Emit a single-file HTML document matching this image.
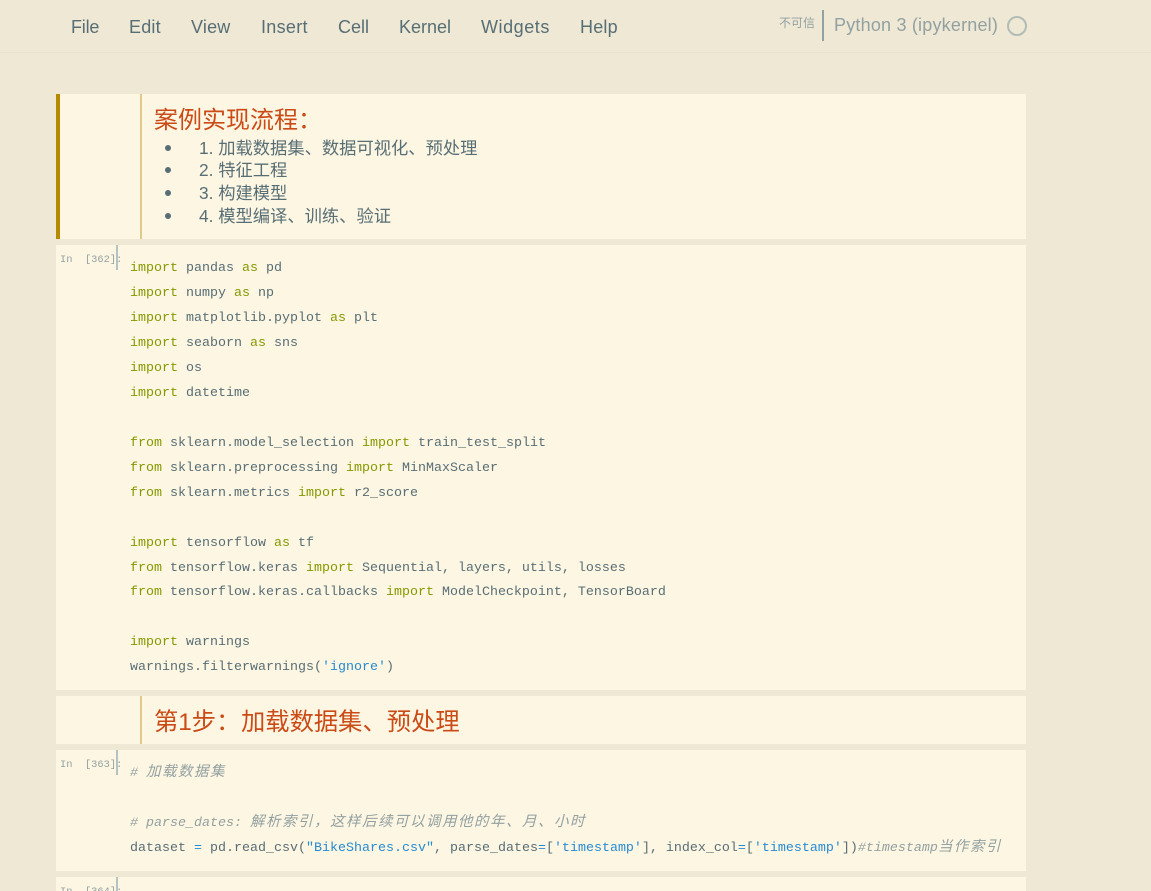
<!DOCTYPE html>
<html lang="zh"><head><meta charset="utf-8"><title>Notebook</title>
<style>
html,body{margin:0;padding:0;width:1151px;height:891px;overflow:hidden;background:#eee8d5}
body{position:relative;font-family:"Liberation Sans","Noto Sans CJK SC",sans-serif;color:#586e75}
.a{position:absolute;white-space:pre}
.box{position:absolute;background:#fdf6e3}
.m{position:absolute;top:16px;font-size:18px;line-height:22px;color:#586e75;white-space:pre}
.c{position:absolute;left:130px;font:13.33px/20px "Liberation Mono","Noto Sans CJK SC",monospace;color:#586e75;white-space:pre}
.k{color:#859900}.s{color:#268bd2}.o{color:#268bd2}
.g{color:#93a1a1;font-style:italic}
.z{font-size:14.5px;letter-spacing:1.5px;line-height:14px}
.p{position:absolute;left:60px;font:10.4px/14px "Liberation Mono",monospace;color:#93a1a1;white-space:pre}
.bar{position:absolute;left:116px;width:2px;height:25px;background:#b5c2c4;z-index:2}
.li{position:absolute;left:199px;font-size:17.3px;line-height:23px;color:#586e75;white-space:pre}
.dot{position:absolute;left:165px;width:6px;height:6px;border-radius:50%;background:#586e75}
.h{position:absolute;font-size:24.3px;line-height:32px;color:#cb4b16;white-space:pre}
</style></head><body>
<div class="a" style="left:0;top:52px;width:1151px;height:1px;background:#e9e2cd"></div>
<div class="m" style="left:71px;letter-spacing:-.2px">File</div>
<div class="m" style="left:129px;letter-spacing:.2px">Edit</div>
<div class="m" style="left:191px;letter-spacing:.2px">View</div>
<div class="m" style="left:261px;letter-spacing:.3px">Insert</div>
<div class="m" style="left:338px">Cell</div>
<div class="m" style="left:399px">Kernel</div>
<div class="m" style="left:481px;letter-spacing:.55px">Widgets</div>
<div class="m" style="left:580px;letter-spacing:.2px">Help</div>
<div class="a" style="left:779px;top:15px;font-size:12px;line-height:17px;color:#93a1a1">不可信</div>
<div class="a" style="left:822px;top:10px;width:2px;height:31px;background:#93a1a1"></div>
<div class="a" style="left:834px;top:13px;font-size:18px;line-height:24px;letter-spacing:.2px;color:#93a1a1">Python 3 (ipykernel)</div>
<div class="a" style="left:1007px;top:16px;width:16px;height:16px;border:2px solid #b3bcb5;border-radius:50%"></div>

<div class="box" style="left:56px;top:94px;width:970px;height:145px"></div>
<div class="a" style="left:56px;top:94px;width:4px;height:145px;background:#b58900"></div>
<div class="a" style="left:140px;top:94px;width:2px;height:145px;background:#e0c98a"></div>
<div class="h" style="left:154px;top:105px;font-size:24px">案例实现流程：</div>
<div class="dot" style="left:165px;top:145px"></div><div class="li" style="top:137px">1. 加载数据集、数据可视化、预处理</div>
<div class="dot" style="left:165px;top:167px"></div><div class="li" style="top:159px">2. 特征工程</div>
<div class="dot" style="left:165px;top:190px"></div><div class="li" style="top:182px">3. 构建模型</div>
<div class="dot" style="left:165px;top:213px"></div><div class="li" style="top:205px">4. 模型编译、训练、验证</div>

<div class="box" style="left:56px;top:245px;width:970px;height:445px"></div>
<div class="bar" style="top:245px"></div>
<div class="p" style="top:253px">In  [362]:</div>
<div class="c" style="top:259px"><span class="k">import</span> pandas <span class="k">as</span> pd</div>
<div class="c" style="top:284px"><span class="k">import</span> numpy <span class="k">as</span> np</div>
<div class="c" style="top:309px"><span class="k">import</span> matplotlib.pyplot <span class="k">as</span> plt</div>
<div class="c" style="top:334px"><span class="k">import</span> seaborn <span class="k">as</span> sns</div>
<div class="c" style="top:359px"><span class="k">import</span> os</div>
<div class="c" style="top:384px"><span class="k">import</span> datetime</div>
<div class="c" style="top:434px"><span class="k">from</span> sklearn.model_selection <span class="k">import</span> train_test_split</div>
<div class="c" style="top:459px"><span class="k">from</span> sklearn.preprocessing <span class="k">import</span> MinMaxScaler</div>
<div class="c" style="top:484px"><span class="k">from</span> sklearn.metrics <span class="k">import</span> r2_score</div>
<div class="c" style="top:534px"><span class="k">import</span> tensorflow <span class="k">as</span> tf</div>
<div class="c" style="top:559px"><span class="k">from</span> tensorflow.keras <span class="k">import</span> Sequential, layers, utils, losses</div>
<div class="c" style="top:583px"><span class="k">from</span> tensorflow.keras.callbacks <span class="k">import</span> ModelCheckpoint, TensorBoard</div>
<div class="c" style="top:633px"><span class="k">import</span> warnings</div>
<div class="c" style="top:658px">warnings.filterwarnings(<span class="s">'ignore'</span>)</div>

<div class="box" style="left:56px;top:696px;width:970px;height:48px"></div>
<div class="a" style="left:140px;top:696px;width:2px;height:48px;background:#e0c98a"></div>
<div class="h" style="left:154px;top:707px">第1步：</div>
<div class="h" style="left:241px;top:707px">加载数据集、预处理</div>

<div class="box" style="left:56px;top:750px;width:970px;height:121px"></div>
<div class="bar" style="top:750px"></div>
<div class="p" style="top:758px">In  [363]:</div>
<div class="c g" style="top:764px"># <span class="z">加载数据集</span></div>
<div class="c g" style="top:814px"># parse_dates: <span class="z">解析索引，这样后续可以调用他的年、月、小时</span></div>
<div class="c" style="top:839px">dataset <span class="o">=</span> pd.read_csv(<span class="s">"BikeShares.csv"</span>, parse_dates<span class="o">=</span>[<span class="s">'timestamp'</span>], index_col<span class="o">=</span>[<span class="s">'timestamp'</span>])<span class="g">#timestamp<span class="z">当作索引</span></span></div>

<div class="box" style="left:56px;top:877px;width:970px;height:14px"></div>
<div class="bar" style="top:877px;height:14px"></div>
<div class="p" style="top:885px">In  [364]:</div>
</body></html>
